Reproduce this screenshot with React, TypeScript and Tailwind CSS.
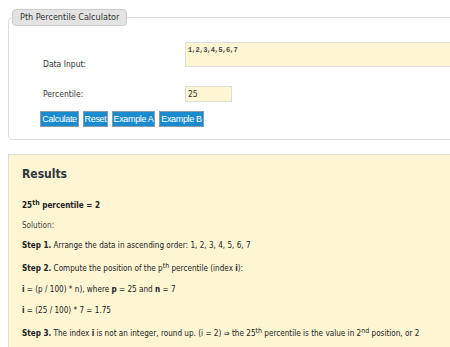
import React from 'react';

const buttons = [
  { label: 'Calculate', w: 'w-[39px]' },
  { label: 'Reset', w: 'w-[25px]' },
  { label: 'Example A', w: 'w-[43px]' },
  { label: 'Example B', w: 'w-[45px]' },
];

function Sup({ children }: { children: React.ReactNode }) {
  return <sup className="text-[7px] leading-none relative -top-[3.5px]">{children}</sup>;
}

export default function App() {
  return (
    <div className="w-[450px] h-[347px] overflow-hidden bg-white">
      <div className="w-[520px] pl-2 pt-[9px] font-['DejaVu_Sans_Condensed','Liberation_Sans',sans-serif] text-[8.1px] text-[#333]">
        {/* Calculator form */}
        <fieldset className="border border-[#ddd] rounded-[4px] px-[3px] h-[131px]">
          <legend className="bg-[#e3e3e3] border border-[#ccc] rounded-[4px] px-[7px] h-[17px] leading-[15px] text-[9px] text-[#333]">
            Pth Percentile Calculator
          </legend>

          <div className="mt-[16px] flex items-start">
            <div className="w-[173px] pl-[31px] pt-[17px] leading-[11px] text-[8.5px]">Data Input:</div>
            <textarea
              readOnly
              value="1,2,3,4,5,6,7"
              className="w-[310px] h-[25px] bg-[#fef5d3] border border-[#ddd] resize-none px-[2px] pt-[3px] font-['Liberation_Mono',monospace] text-[7px] leading-[9px] tracking-[-0.4px] font-bold text-[#444] outline-none"
            />
          </div>

          <div className="mt-[16px] flex items-center">
            <div className="w-[173px] pl-[31px] leading-[11px] text-[8.5px]">Percentile:</div>
            <input
              readOnly
              value="25"
              className="w-[47px] h-[16px] bg-[#fef5d3] border border-[#ddd] px-[2px] text-[8.5px] text-[#333] outline-none"
            />
          </div>

          <div className="mt-[9px] pl-[28px] flex gap-[4px]">
            {buttons.map((b) => (
              <button
                key={b.label}
                className={`${b.w} h-[16px] bg-[#1a8bcf] border border-[#8a9aa6] text-white font-['Liberation_Sans',sans-serif] text-[9px] tracking-[-0.35px] leading-[14px] text-center whitespace-nowrap`}
              >
                {b.label}
              </button>
            ))}
          </div>
        </fieldset>

        {/* Results */}
        <div className="mt-[14px] border border-[#ddd] bg-[#fef5d3] pl-[13px] pt-[12px] h-[260px] text-[#222]">
          <h2 className="text-[12px] font-bold text-[#2f3640] leading-[14px]">Results</h2>
          <p className="mt-[19px] font-bold leading-[11px]">
            25<Sup>th</Sup> percentile = 2
          </p>
          <p className="mt-[9px] leading-[11px] text-[#444]">Solution:</p>
          <p className="mt-[9px] leading-[11px]">
            <b>Step 1.</b> Arrange the data in ascending order: 1, 2, 3, 4, 5, 6, 7
          </p>
          <p className="mt-[12px] leading-[11px]">
            <b>Step 2.</b> Compute the position of the p<Sup>th</Sup> percentile (index <b>i</b>):
          </p>
          <p className="mt-[10px] leading-[11px]">
            <b>i</b> = (p / 100) * n), where <b>p</b> = 25 and <b>n</b> = 7
          </p>
          <p className="mt-[10px] leading-[11px]">
            <b>i</b> = (25 / 100) * 7 = 1.75
          </p>
          <p className="mt-[12px] leading-[11px]">
            <b>Step 3.</b> The index <b>i</b> is not an integer, round up. (i = 2) ⇒ the 25<Sup>th</Sup> percentile is the value in 2<Sup>nd</Sup> position, or 2
          </p>
        </div>
      </div>
    </div>
  );
}
